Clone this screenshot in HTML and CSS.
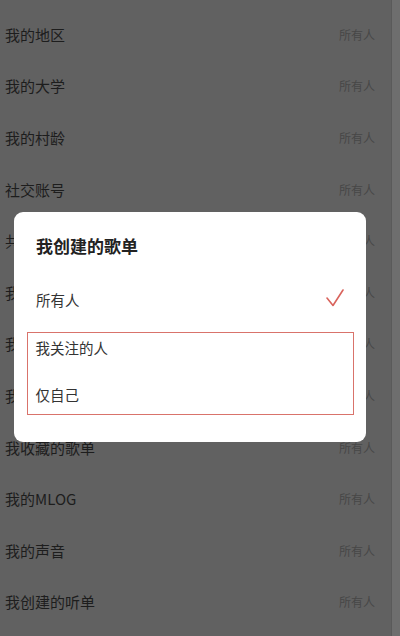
FILE: index.html
```html
<!DOCTYPE html>
<html lang="zh-CN">
<head>
<meta charset="utf-8">
<title>隐私设置</title>
<link rel="stylesheet" href="styles.css">
</head>
<body>
<div class="screen">
  <div class="list">
    <div class="row"><span class="name">我的地区</span><span class="val">所有人</span></div>
    <div class="row"><span class="name">我的大学</span><span class="val">所有人</span></div>
    <div class="row"><span class="name">我的村龄</span><span class="val">所有人</span></div>
    <div class="row"><span class="name">社交账号</span><span class="val">所有人</span></div>
    <div class="row"><span class="name">共同喜好</span><span class="val">所有人</span></div>
    <div class="row"><span class="name">我的主页</span><span class="val">所有人</span></div>
    <div class="row"><span class="name">我的动态</span><span class="val">所有人</span></div>
    <div class="row"><span class="name">我创建的歌单</span><span class="val">所有人</span></div>
    <div class="row"><span class="name">我收藏的歌单</span><span class="val">所有人</span></div>
    <div class="row"><span class="name">我的MLOG</span><span class="val">所有人</span></div>
    <div class="row"><span class="name">我的声音</span><span class="val">所有人</span></div>
    <div class="row"><span class="name">我创建的听单</span><span class="val">所有人</span></div>
  </div>
  <div class="edge"></div>

  <div class="modal">
    <div class="title">我创建的歌单</div>
    <div class="option selected">
      <span>所有人</span>
      <svg class="check" width="18" height="18" viewBox="0 0 18 18"><path d="M1 9 L7 16.5 L17 1" fill="none" stroke="#d9635c" stroke-width="1.6" stroke-linecap="round" stroke-linejoin="round"/></svg>
    </div>
    <div class="box">
      <div class="option first">我关注的人</div>
      <div class="option second">仅自己</div>
    </div>
  </div>
</div>
</body>
</html>
```

FILE: styles.css
```css
html, body {
  margin: 0;
  padding: 0;
}
body {
  width: 400px;
  height: 636px;
  overflow: hidden;
  font-family: "Noto Sans CJK SC", "Noto Sans", sans-serif;
  background: #616161;
}
.screen {
  position: relative;
  display: flex;
  width: 400px;
  height: 636px;
}
.list {
  width: 392px;
  padding-top: 9px;
  display: flex;
  flex-direction: column;
}
.row {
  height: 51.6px;
  flex: 0 0 51.6px;
  display: flex;
  align-items: center;
  justify-content: space-between;
  padding-left: 5px;
  padding-right: 16px;
  box-sizing: border-box;
}
.name {
  font-size: 15px;
  color: #1d1d1d;
  line-height: 20px;
}
.val {
  font-size: 12px;
  color: #474747;
  line-height: 16px;
}
.edge {
  width: 8px;
  background: #6e6e6e;
  border-left: 1px solid #5a5a5a;
}
.modal {
  position: absolute;
  left: 14px;
  top: 212px;
  width: 352px;
  height: 230px;
  background: #ffffff;
  border-radius: 9px;
  box-sizing: border-box;
  padding: 0 12px 0 13px;
  display: flex;
  flex-direction: column;
}
.title {
  margin-top: 24px;
  padding-left: 9px;
  font-size: 17px;
  font-weight: bold;
  line-height: 20px;
  color: #222222;
}
.option {
  font-size: 14.5px;
  line-height: 20px;
  color: #333333;
  padding-left: 9px;
}
.selected {
  margin-top: 34px;
  display: flex;
  align-items: center;
  justify-content: space-between;
  padding-right: 10px;
}
.check {
  display: block;
  margin-top: -4px;
}
.box {
  margin-top: 22px;
  height: 83px;
  box-sizing: border-box;
  border: 1.5px solid #d9736b;
  display: flex;
  flex-direction: column;
}
.box .option {
  padding-left: 7.5px;
}
.first {
  margin-top: 4.5px;
}
.second {
  margin-top: 27px;
}
```
